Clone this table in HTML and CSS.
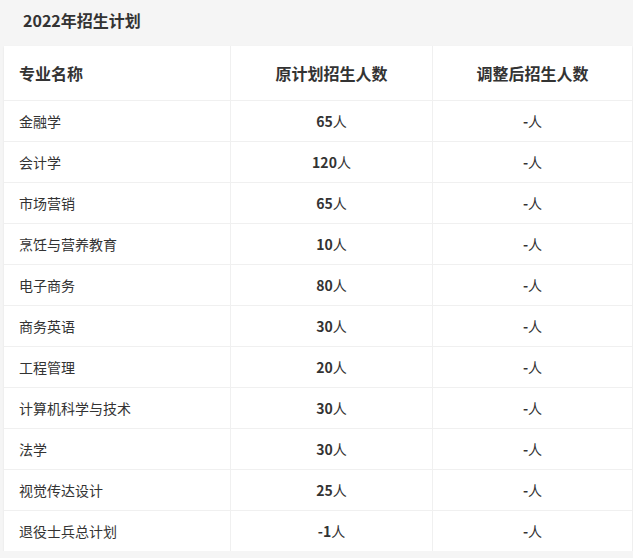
FILE: index.html
```html
<!DOCTYPE html>
<html lang="zh">
<head>
<meta charset="utf-8">
<link rel="stylesheet" href="styles.css">
</head>
<body>
<div class="title">2022年招生计划</div>
<div class="card">
<table class="plan">
<thead>
<tr><th class="c1">专业名称</th><th class="c2">原计划招生人数</th><th class="c3">调整后招生人数</th></tr>
</thead>
<tbody>
<tr><td>金融学</td><td class="num"><b>65</b>人</td><td class="num"><b>-</b>人</td></tr>
<tr><td>会计学</td><td class="num"><b>120</b>人</td><td class="num"><b>-</b>人</td></tr>
<tr><td>市场营销</td><td class="num"><b>65</b>人</td><td class="num"><b>-</b>人</td></tr>
<tr><td>烹饪与营养教育</td><td class="num"><b>10</b>人</td><td class="num"><b>-</b>人</td></tr>
<tr><td>电子商务</td><td class="num"><b>80</b>人</td><td class="num"><b>-</b>人</td></tr>
<tr><td>商务英语</td><td class="num"><b>30</b>人</td><td class="num"><b>-</b>人</td></tr>
<tr><td>工程管理</td><td class="num"><b>20</b>人</td><td class="num"><b>-</b>人</td></tr>
<tr><td>计算机科学与技术</td><td class="num"><b>30</b>人</td><td class="num"><b>-</b>人</td></tr>
<tr><td>法学</td><td class="num"><b>30</b>人</td><td class="num"><b>-</b>人</td></tr>
<tr><td>视觉传达设计</td><td class="num"><b>25</b>人</td><td class="num"><b>-</b>人</td></tr>
<tr><td>退役士兵总计划</td><td class="num"><b>-1</b>人</td><td class="num"><b>-</b>人</td></tr>
</tbody>
</table>
</div>
</body>
</html>
```
FILE: styles.css
```css
html, body {
  margin: 0;
  padding: 0;
  background: #f5f5f5;
  font-family: "Noto Sans CJK SC", "Noto Sans", sans-serif;
  color: #333;
}
.title {
  height: 40px;
  line-height: 40px;
  padding: 0 0 6px 23px;
  font-size: 16px;
  font-weight: bold;
  color: #333;
}
.card {
  margin: 0 1px 0 4px;
  background: #fff;
  box-shadow: 0 1px 2px rgba(0,0,0,0.08);
}
.plan {
  width: 100%;
  border-collapse: collapse;
  table-layout: fixed;
}
.plan th, .plan td {
  border-left: 1px solid #f0f0f0;
  border-bottom: 1px solid #f0f0f0;
  padding: 0;
}
.plan th:first-child, .plan td:first-child {
  border-left: none;
  text-align: left;
  padding-left: 15px;
}
.plan tr:last-child td {
  border-bottom: none;
}
.plan th {
  height: 54px;
  font-size: 16px;
  font-weight: 600;
  text-align: center;
}
.plan td {
  height: 40px;
  font-size: 14px;
}
.c1 { width: 211px; }
.c2 { width: 201px; }
.num {
  text-align: center;
}
.num b {
  font-weight: bold;
}
```
